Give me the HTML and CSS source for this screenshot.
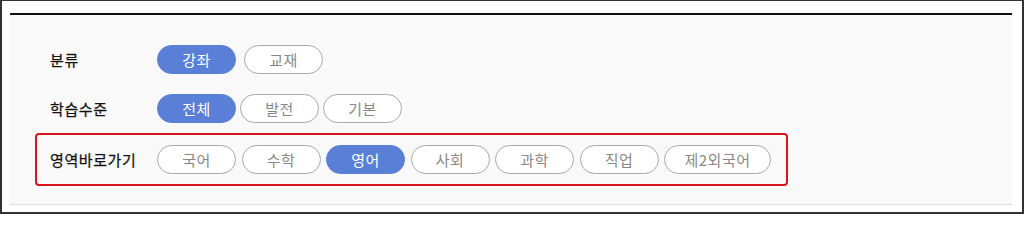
FILE: index.html
```html
<!DOCTYPE html>
<html lang="ko">
<head>
<meta charset="utf-8">
<link rel="stylesheet" href="styles.css">
</head>
<body>
<div class="frame">
  <div class="panel">
    <div class="row">
      <div class="label">분류</div>
      <div class="chips gap8">
        <span class="chip on">강좌</span>
        <span class="chip">교재</span>
      </div>
    </div>
    <div class="row row2">
      <div class="label">학습수준</div>
      <div class="chips gap4">
        <span class="chip on">전체</span>
        <span class="chip">발전</span>
        <span class="chip">기본</span>
      </div>
    </div>
    <div class="row highlight">
      <div class="label">영역바로가기</div>
      <div class="chips gap5">
        <span class="chip">국어</span>
        <span class="chip">수학</span>
        <span class="chip on">영어</span>
        <span class="chip">사회</span>
        <span class="chip">과학</span>
        <span class="chip">직업</span>
        <span class="chip wide">제2외국어</span>
      </div>
    </div>
  </div>
</div>
</body>
</html>
```
FILE: styles.css
```css
html, body {
  margin: 0;
  padding: 0;
  background: #fff;
}
body {
  font-family: "Noto Sans CJK KR", "Noto Sans", sans-serif;
}
.frame {
  box-sizing: border-box;
  width: 1024px;
  height: 214px;
  border: 2px solid #333;
  border-top-width: 1px;
  background: #fff;
  padding: 12px 10px 0 8px;
}
.panel {
  box-sizing: border-box;
  width: 1002px;
  height: 192px;
  background: #f9f9f9;
  border-top: 2px solid #111;
  border-bottom: 1px solid #ddd;
  padding: 30px 0 0 0;
}
.row {
  display: flex;
  align-items: center;
  padding-left: 40px;
}
.row2 {
  margin-top: 20px;
}
.label {
  width: 107px;
  font-size: 15px;
  font-weight: 400;
  color: #111;
  letter-spacing: 0.6px;
  -webkit-text-stroke: 0.25px #111;
}
.chips {
  display: flex;
  align-items: center;
}
.gap8 { gap: 8px; }
.gap4 { gap: 4px; }
.gap5 { gap: 5.5px; }
.chip {
  box-sizing: border-box;
  width: 79px;
  height: 29px;
  border: 1px solid #a9a9a9;
  border-radius: 15px;
  display: flex;
  align-items: center;
  justify-content: center;
  font-size: 15px;
  color: #888;
  background: #fff;
  letter-spacing: 0.5px;
}
.chip.on {
  background: #5a7fd7;
  border-color: #5a7fd7;
  color: #fff;
}
.chip.wide {
  width: 107px;
}
.highlight {
  box-sizing: border-box;
  width: 753px;
  height: 53px;
  margin: 10px 0 0 25px;
  padding-left: 13px;
  border: 2px solid #d8151c;
  border-radius: 4px;
}
```
